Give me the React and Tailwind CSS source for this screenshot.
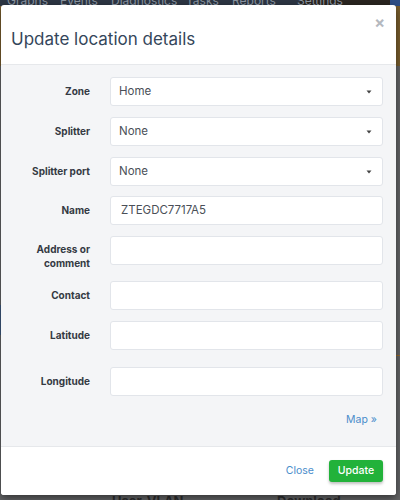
import React from "react";

const font = { fontFamily: "Inter, 'Noto Sans', sans-serif" };

function Caret() {
  return (
    <svg width="6" height="4" viewBox="0 0 6 4" className="shrink-0">
      <path d="M0.5 0.5 L5.5 0.5 L3 3.5 Z" fill="#444" />
    </svg>
  );
}

function Row({ label, value, select, labelTop = "pt-[7px]", mb = "mb-[11px]" }) {
  return (
    <div className={`flex items-start ${mb}`}>
      <div
        className={`w-[89px] shrink-0 text-right text-[10px] leading-[14px] font-bold text-[#343a43] ${labelTop}`}
      >
        {label}
      </div>
      <div
        className={`ml-[20px] flex-1 h-[29px] bg-white border border-[#e2e5ea] rounded-[3px] flex items-center pr-[10px] text-[11.5px] text-[#4a4f57] ${
          select ? "pl-[8px]" : "pl-[10px]"
        }`}
      >
        <span className="flex-1">{value}</span>
        {select && <Caret />}
      </div>
    </div>
  );
}

export default function App() {
  return (
    <div className="relative w-[400px] h-[500px] overflow-hidden bg-[#5e5f61]" style={font}>
      {/* background page (dimmed) */}
      <div className="absolute left-0 top-0 w-[400px] h-[6px] bg-[#2d3644] overflow-hidden">
        <div className="absolute left-[300px] top-0 w-[90px] h-[6px] bg-[#2a2520]" />
        <div className="absolute left-[390px] top-0 w-[10px] h-[6px] bg-[#2f4f86]" />
        <div className="absolute -top-[8px] left-[7px] flex text-[12px] text-[#8c96a3] whitespace-nowrap">
          <span className="w-[53px]">Graphs</span>
          <span className="w-[51px]">Events</span>
          <span className="w-[75px]">Diagnostics</span>
          <span className="w-[46px]">Tasks</span>
          <span className="w-[65px]">Reports</span>
          <span>Settings</span>
        </div>
      </div>
      <div className="absolute left-0 top-[6px] w-[400px] h-[60px] bg-[#7a5f2e]" />
      <div className="absolute left-0 top-[66px] w-[400px] h-[434px] bg-[#646567]" />
      <div className="absolute left-0 top-[305px] w-[2px] h-[30px] bg-[#3d5a80]" />
      <div className="absolute left-[396px] top-[355px] w-[4px] h-[1px] bg-[#9a6b2a]" />
      <div className="absolute left-[112px] top-[492px] text-[13px] font-bold text-[#2f2f30] whitespace-nowrap">
        User-VLAN
      </div>
      <div className="absolute left-[277px] top-[492px] text-[13px] font-bold text-[#2f2f30] whitespace-nowrap">
        Download
      </div>

      {/* modal */}
      <div className="absolute left-[1px] top-[5px] w-[395px] h-[490px] bg-white rounded-[3px] shadow-[0_3px_9px_rgba(0,0,0,0.5)] flex flex-col overflow-hidden">
        <div className="relative h-[60px] shrink-0 border-b border-[#e6e8eb] flex items-center pl-[10px]">
          <h1 className="text-[17px] leading-[22px] text-[#34465a] font-normal mt-[8px]">
            Update location details
          </h1>
          <span className="absolute right-[11px] top-[9px] text-[16px] leading-[16px] font-bold text-[#b5b9bf]">
            ×
          </span>
        </div>
        <div className="flex-1 bg-[#f4f5f7] pt-[12px] pr-[13px] flex flex-col">
          <Row label="Zone" value="Home" select />
          <Row label="Splitter" value="None" select />
          <Row label="Splitter port" value="None" select mb="mb-[10px]" />
          <Row label="Name" value="ZTEGDC7717A5" />
          <Row label={<>Address or<br />comment</>} labelTop="pt-[6px]" />
          <Row label="Contact" />
          <Row label="Latitude" mb="mb-[17px]" />
          <Row label="Longitude" mb="mb-0" />
          <div className="flex justify-end pr-[6px] mt-[16px]">
            <span className="text-[10.5px] leading-[16px] text-[#4a8dcb]">Map »</span>
          </div>
        </div>
        <div className="h-[49px] shrink-0 border-t border-[#e6e8eb] bg-white flex items-center justify-end pr-[13px] gap-[15px]">
          <span className="text-[10.5px] text-[#4a8dcb]">Close</span>
          <button className="w-[54px] h-[22px] rounded-[3px] bg-[#22b23a] text-white text-[10.5px] font-medium shadow-[0_2px_3px_rgba(0,0,0,0.25)]">
            Update
          </button>
        </div>
      </div>
    </div>
  );
}
